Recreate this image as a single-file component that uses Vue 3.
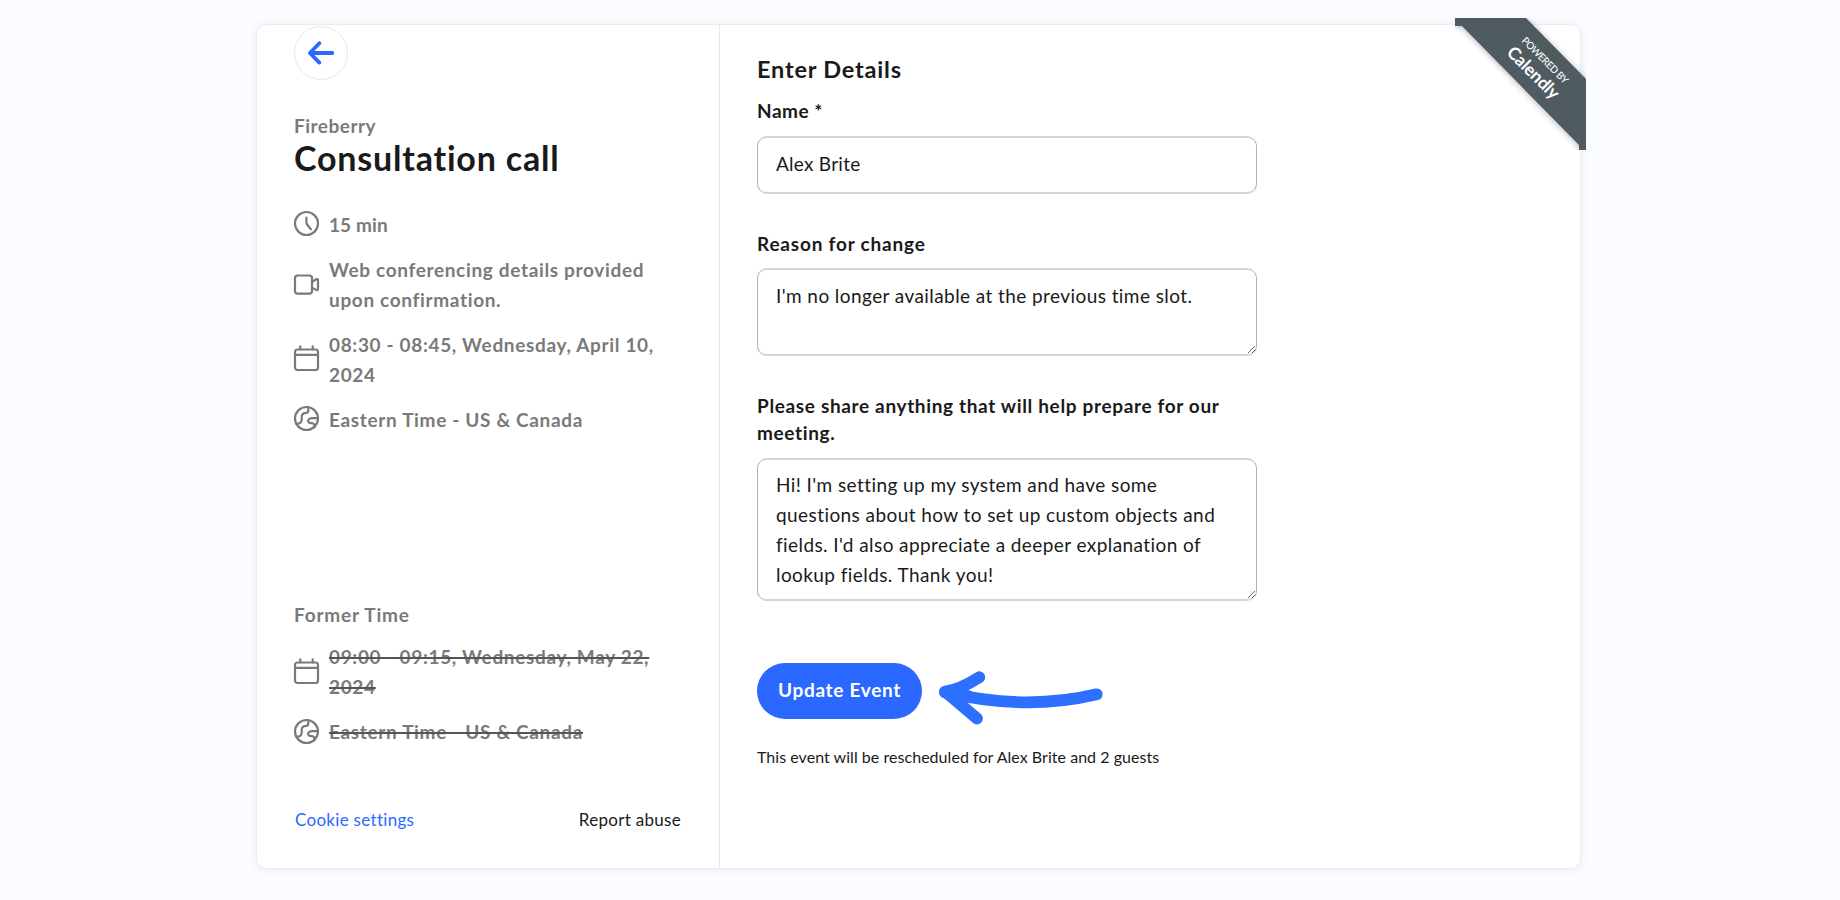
<script setup>
import { h, ref } from "vue";

const name = ref("Alex Brite");
const reason = ref("I'm no longer available at the previous time slot.");
const notes = ref(
  "Hi! I'm setting up my system and have some questions about how to set up custom objects and fields. I'd also appreciate a deeper explanation of lookup fields. Thank you!"
);

const details = [
  { icon: "clock", text: "15 min" },
  {
    icon: "video",
    text: "Web conferencing details provided upon confirmation.",
  },
  { icon: "calendar", text: "08:30 - 08:45, Wednesday, April 10, 2024" },
  { icon: "globe", text: "Eastern Time - US & Canada" },
];

const former = [
  { icon: "calendar", text: "09:00 - 09:15, Wednesday, May 22, 2024" },
  { icon: "globe", text: "Eastern Time - US & Canada" },
];

const shapes = {
  clock: [
    ["circle", { cx: 12.5, cy: 12.5, r: 11.5 }],
    ["path", { d: "M12.4 6.6V11.4Q12.4 12.6 13.3 13.8L16.9 18.2" }],
  ],
  video: [
    ["rect", { x: 1, y: 4.5, width: 17, height: 18.2, rx: 2.6 }],
    ["path", { d: "M18 11L22.2 8.3Q24 7.5 24 9V17.8Q24 19.5 22.2 18.9L18 16.6" }],
  ],
  calendar: [
    ["rect", { x: 1, y: 3.5, width: 23, height: 20.5, rx: 2.4 }],
    ["path", { d: "M1 8.8H24M6.3 0.3V3.5M18.7 0.3V3.5" }],
  ],
  globe: [
    ["circle", { cx: 12.5, cy: 12.5, r: 11.5 }],
    [
      "path",
      {
        d: "M14.3 1V4.4Q14.3 6.6 12 6.9C9 7.2 7.7 8.6 7.7 10.8V13.6C7.7 16.6 6 17.9 2.4 17.9",
      },
    ],
    [
      "path",
      {
        d: "M24 12.2H18.2C14.6 12.2 13.3 14.4 14.6 16.2C15.8 17.7 20.3 16.2 20.3 19V21.4",
      },
    ],
  ],
};

function Icon(props) {
  return h(
    "svg",
    { class: "icon", viewBox: "0 0 25 25", "aria-hidden": "true" },
    shapes[props.name].map(([tag, attrs]) => h(tag, attrs))
  );
}
Icon.props = ["name"];
</script>

<template>
  <main class="page">
    <section class="card">
      <aside class="summary">
        <button class="back" aria-label="Back">
          <svg viewBox="0 0 26 24">
            <path d="M24.3 12H2M11.3 2.2L1.9 12L11.3 21.6" />
          </svg>
        </button>
        <p class="organizer">Fireberry</p>
        <h1 class="title">Consultation call</h1>
        <ul class="details">
          <li v-for="item in details" :key="item.icon">
            <Icon :name="item.icon" />
            <span :class="{ tight: item.icon === 'clock' }">{{ item.text }}</span>
          </li>
        </ul>
        <h2 class="former-title">Former Time</h2>
        <ul class="details former">
          <li v-for="item in former" :key="item.icon">
            <Icon :name="item.icon" />
            <span>{{ item.text }}</span>
          </li>
        </ul>
        <footer class="links">
          <a class="cookie">Cookie settings</a>
          <a>Report abuse</a>
        </footer>
      </aside>

      <form class="form" @submit.prevent>
        <h2 class="form-title">Enter Details</h2>
        <div class="field">
          <label class="name" for="name">Name *</label>
          <input id="name" v-model="name" type="text" spellcheck="false" />
        </div>
        <div class="field">
          <label class="reason" for="reason">Reason for change</label>
          <textarea
            id="reason"
            v-model="reason"
            class="short"
            spellcheck="false"
          ></textarea>
        </div>
        <div class="field">
          <label for="notes">
            Please share anything that will help prepare for our meeting.
          </label>
          <textarea
            id="notes"
            v-model="notes"
            class="tall"
            spellcheck="false"
          ></textarea>
        </div>
        <div class="submit">
          <button class="update" type="submit">Update Event</button>
          <svg class="pointer" viewBox="0 0 166 56">
            <path d="M159.7 22.3Q89 39.3 8 20.3" />
            <path d="M42.3 5.2Q22 18 8 19.5Q10 21 40 46.5" />
            <path class="tip" d="M7.5 20L24 17L34 21L30 27L22 29Z" />
          </svg>
        </div>
        <p class="note">
          This event will be rescheduled for Alex Brite and 2 guests
        </p>
      </form>

      <svg class="ribbon" viewBox="0 0 131 132">
        <path class="band" d="M0 0H71L131 61V132H124V127L7 8H0Z" />
        <g transform="translate(90 42.3) rotate(45)">
          <text class="powered" y="3.5" textLength="61">POWERED BY</text>
        </g>
        <g transform="translate(78 55) rotate(45)">
          <text class="brand" y="5.5" textLength="66">Calendly</text>
        </g>
      </svg>
    </section>
  </main>
</template>

<style>
body {
  background: #fafcff;
}
</style>

<style scoped>
.page {
  height: 900px;
  padding: 24px 259px 0 256px;
  box-sizing: border-box;
  overflow: hidden;
  color: #1a1a1a;
  font-family: "Lato", sans-serif;
  font-size: 19px;
  font-variant-ligatures: none;
}

h1,
h2,
p,
ul {
  margin: 0;
  padding: 0;
}

.card {
  position: relative;
  display: flex;
  height: 845px;
  box-sizing: border-box;
  border: 1px solid #ebecef;
  border-radius: 10px;
  background: #fff;
  box-shadow: 0 1px 8px rgba(0, 0, 0, 0.07);
}

.summary {
  display: flex;
  flex-direction: column;
  width: 463px;
  box-sizing: border-box;
  padding: 1px 38px 36px 37px;
  border-right: 1px solid #e8e8e8;
  color: #7a7a7a;
}

.back {
  display: flex;
  align-items: center;
  justify-content: center;
  width: 54px;
  height: 54px;
  margin-bottom: 32px;
  padding: 0;
  border: 1px solid #e8e8e8;
  border-radius: 50%;
  background: #fff;
}

.back svg {
  width: 26px;
  height: 24px;
  fill: none;
  stroke: #2b68ff;
  stroke-width: 3.8;
  stroke-linecap: round;
  stroke-linejoin: round;
}

.organizer {
  font-weight: 700;
  line-height: 27px;
  letter-spacing: 0.5px;
}

.title {
  margin-bottom: 33px;
  color: #1a1a1a;
  font-size: 34px;
  line-height: 38px;
  letter-spacing: 0.8px;
}

.details {
  display: flex;
  flex-direction: column;
  gap: 15px;
  list-style: none;
  font-weight: 700;
  line-height: 30px;
  letter-spacing: 0.66px;
}

.details li {
  display: flex;
  align-items: center;
  gap: 10px;
}

.details .tight {
  letter-spacing: 0.1px;
}

.icon {
  flex: none;
  width: 25px;
  height: 25px;
  margin-top: -4px;
  overflow: visible;
  fill: none;
  stroke: #7a7a7a;
  stroke-width: 2.2;
  stroke-linecap: round;
  stroke-linejoin: round;
}

.former-title {
  margin-top: auto;
  margin-bottom: 12px;
  font-size: 19px;
  line-height: 30px;
  letter-spacing: 0.8px;
}

.former {
  margin-bottom: 61px;
}

.former span {
  text-decoration: line-through;
  text-decoration-color: #555;
  text-decoration-thickness: 2px;
}

.former .icon {
  margin-top: -2px;
}

.links {
  display: flex;
  justify-content: space-between;
  padding-left: 1px;
  font-size: 17px;
  line-height: 24px;
  letter-spacing: 0.3px;
  color: #1a1a1a;
}

.links .cookie {
  color: #2b68ff;
}

.form {
  width: 500px;
  padding: 29px 0 0 37px;
}

.form-title {
  margin-bottom: 13px;
  font-size: 23.5px;
  line-height: 30px;
  letter-spacing: 0.8px;
}

.field {
  margin-bottom: 36px;
}

.field label {
  display: block;
  margin-bottom: 12px;
  font-weight: 700;
  line-height: 27px;
  letter-spacing: 0.65px;
}

.field label.name {
  letter-spacing: 0.5px;
}

.field label.reason {
  margin-bottom: 11px;
  letter-spacing: 0.8px;
}

input,
textarea {
  display: block;
  width: 500px;
  box-sizing: border-box;
  border: 1px solid #b3b3b3;
  border-top: 2px solid #d4d4d4;
  border-bottom: 2px solid #d4d4d4;
  border-radius: 10px;
  padding: 11px 17px 8px 18px;
  background: #fff;
  color: #1a1a1a;
  font: inherit;
  font-variant-ligatures: none;
  line-height: 30px;
  letter-spacing: 0.42px;
  outline: none;
  overflow: hidden;
}

input {
  height: 58px;
  padding: 10px 18px 14px;
  letter-spacing: 0.26px;
}

.short {
  height: 88px;
}

.tall {
  height: 143px;
  padding-top: 10px;
}

.submit {
  display: flex;
  align-items: flex-start;
  gap: 15px;
  margin: 62px 0 17px;
}

.update {
  width: 165px;
  height: 56px;
  padding: 0 0 3px;
  border: none;
  border-radius: 28px;
  background: #2b68ff;
  color: #fff;
  font: inherit;
  font-weight: 700;
  letter-spacing: 0.7px;
}

.pointer {
  width: 166px;
  height: 56px;
  margin-top: 9px;
  overflow: visible;
  fill: none;
  stroke: #2d70ff;
  stroke-width: 11.8;
  stroke-linecap: round;
  stroke-linejoin: round;
}

.pointer .tip {
  fill: #2d70ff;
  stroke-width: 4;
}

.note {
  font-size: 16px;
  line-height: 24px;
  letter-spacing: 0.04px;
}

/* corner banner hangs over the top right edge of the card */
.ribbon {
  position: absolute;
  top: -7px;
  right: -6px;
  width: 131px;
  height: 132px;
  overflow: hidden;
}

.ribbon .band {
  fill: #505a61;
  filter: drop-shadow(0 1px 3px rgba(0, 0, 0, 0.3));
}

.ribbon text {
  fill: #fff;
  text-anchor: middle;
}

.ribbon .powered {
  font-size: 10px;
  font-weight: 500;
}

.ribbon .brand {
  font-size: 17.5px;
  font-weight: 700;
}
</style>
